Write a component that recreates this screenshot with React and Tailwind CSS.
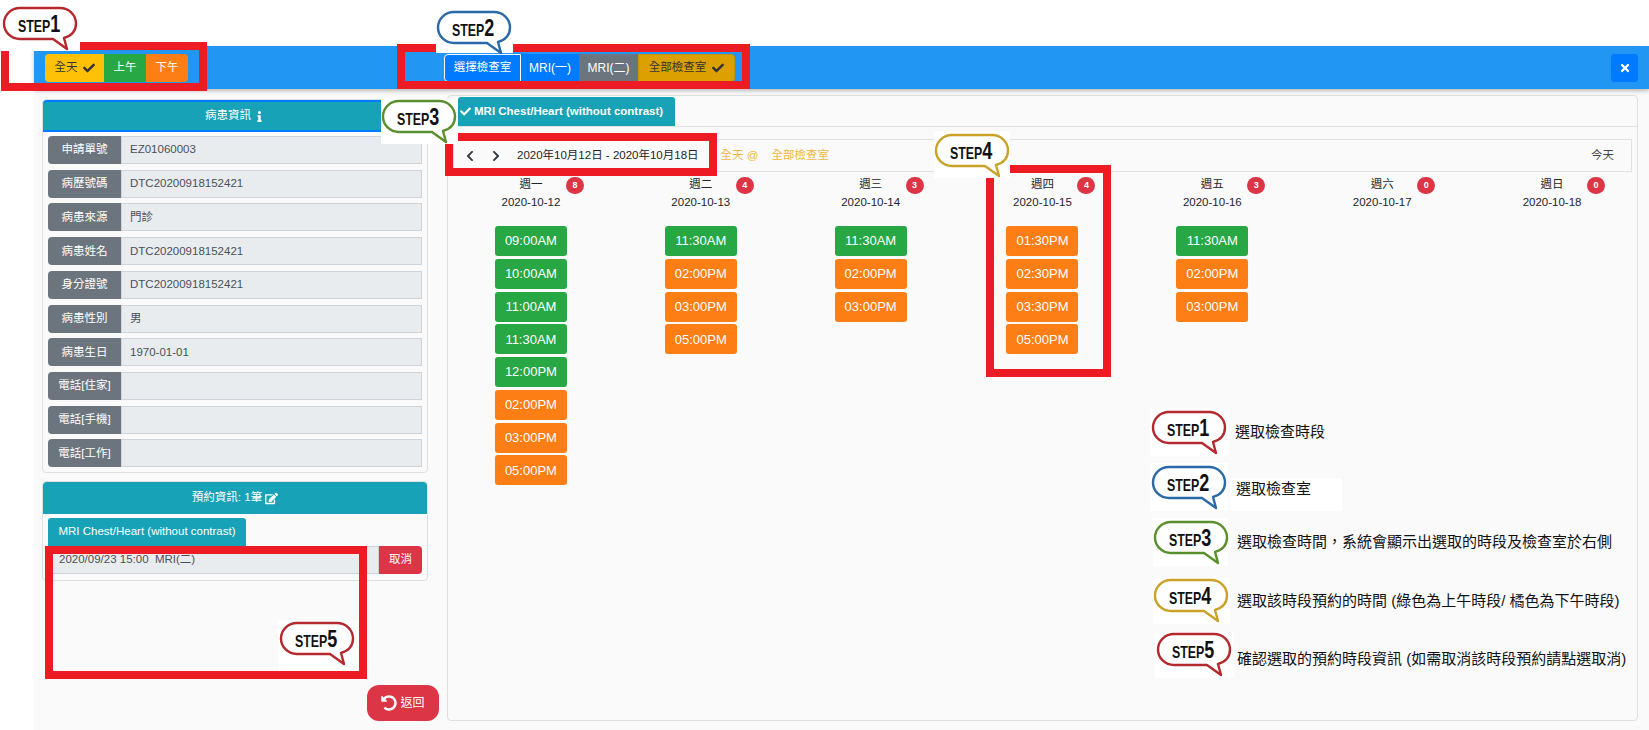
import React from 'react';
import { FaCheck, FaInfo, FaEdit, FaChevronLeft, FaChevronRight, FaUndoAlt, FaTimes } from 'react-icons/fa';

const patient = [
  ['申請單號', 'EZ01060003'],
  ['病歷號碼', 'DTC20200918152421'],
  ['病患來源', '門診'],
  ['病患姓名', 'DTC20200918152421'],
  ['身分證號', 'DTC20200918152421'],
  ['病患性別', '男'],
  ['病患生日', '1970-01-01'],
  ['電話[住家]', ''],
  ['電話[手機]', ''],
  ['電話[工作]', ''],
];

const days = [
  { name: '週一', date: '2020-10-12', count: 8, early: true, slots: ['09:00AM', '10:00AM', '11:00AM', '11:30AM', '12:00PM', '02:00PM', '03:00PM', '05:00PM'] },
  { name: '週二', date: '2020-10-13', count: 4, early: true, slots: ['11:30AM', '02:00PM', '03:00PM', '05:00PM'] },
  { name: '週三', date: '2020-10-14', count: 3, early: true, slots: ['11:30AM', '02:00PM', '03:00PM'] },
  { name: '週四', date: '2020-10-15', count: 4, slots: ['01:30PM', '02:30PM', '03:30PM', '05:00PM'] },
  { name: '週五', date: '2020-10-16', count: 3, slots: ['11:30AM', '02:00PM', '03:00PM'] },
  { name: '週六', date: '2020-10-17', count: 0, slots: [] },
  { name: '週日', date: '2020-10-18', count: 0, slots: [] },
];

function StepBubble({ n, color, className }) {
  return (
    <div className={`bg-white ${className}`}>
      <svg width="78" height="46" viewBox="1 1 78 46" className="block">
        <path
          d="M19 3H59C68 3 75 10 75 18.5C75 26 70 31 63 33L66 44L52 34H19C10 34 3 27 3 18.5C3 10 10 3 19 3Z"
          fill="#fff"
          stroke={color}
          strokeWidth="2.4"
          strokeLinejoin="round"
        />
        <text transform="translate(17 27) scale(0.75 1)" fontWeight="700" fill="#111" fontFamily="Liberation Sans, sans-serif">
          <tspan fontSize="16.5">STEP</tspan><tspan fontSize="24">{n}</tspan>
        </text>
      </svg>
    </div>
  );
}

function InfoRow({ label, value }) {
  return (
    <div className="flex h-[28px]">
      <div className="w-[73px] shrink-0 flex items-center justify-center rounded-l bg-[#6c757d] text-white">{label}</div>
      <div className="flex-1 flex items-center pl-[8px] bg-[#e9ecef] border border-[#ced4da] text-[#495057]">{value}</div>
    </div>
  );
}

function CardHeader({ children, className = '' }) {
  return (
    <div className={`h-[32px] flex items-center justify-center gap-[3px] bg-[#17a2b8] text-white ${className}`}>
      {children}
    </div>
  );
}

function DayColumn({ day }) {
  return (
    <div className={`flex flex-col items-center pt-[3px] ${day.early ? 'pr-[4px]' : ''}`}>
      <div className="relative w-full text-center text-[#212529]">
        <div className="h-[18px] leading-[18px]">{day.name}</div>
        <div className="h-[18px] leading-[18px]">{day.date}</div>
        <span className="absolute left-[calc(50%+35px)] top-[2px] w-[18px] h-[17px] rounded-full bg-[#dc3545] text-white text-[9px] font-bold flex items-center justify-center">
          {day.count}
        </span>
      </div>
      <div className="mt-[15px] flex flex-col gap-[2.75px]">
        {day.slots.map((slot) => (
          <div
            key={slot}
            className={`w-[72px] h-[30px] rounded-[3px] flex items-center justify-center text-white text-[13px] ${slot.includes('AM') || slot.startsWith('12') ? 'bg-[#28a745]' : 'bg-[#fd7e14]'}`}
          >
            {slot}
          </div>
        ))}
      </div>
    </div>
  );
}

export default function App() {
  return (
    <div className="relative w-[1649px] h-[730px] overflow-hidden bg-white text-[11.5px] [font-family:'Liberation_Sans','Noto_Sans_CJK_TC',sans-serif]">
      <div className="ml-[34px] pt-[46px] h-full flex flex-col">

        {/* Top bar */}
        <div className="relative z-10 h-[43px] shrink-0 flex items-center pl-[11px] pr-[11px] bg-[#2196f3] shadow-[0_2px_4px_rgba(0,0,0,0.25)]">
          <div className="flex h-[28px] text-white">
            <div className="w-[59px] flex items-center justify-center gap-[5px] rounded-l bg-[#ffc107] text-[#333]">全天 <FaCheck className="text-[12px]" /></div>
            <div className="w-[42px] flex items-center justify-center bg-[#28a745]">上午</div>
            <div className="w-[42px] flex items-center justify-center rounded-r bg-[#fd7e14]">下午</div>
          </div>
          <div className="flex h-[28px] ml-[256px] text-white">
            <div className="w-[77px] flex items-center justify-center rounded-l border border-white bg-[#007bff]">選擇檢查室</div>
            <div className="w-[58px] flex items-center justify-center bg-[#007bff] text-[12px]">MRI(一)</div>
            <div className="w-[59px] flex items-center justify-center bg-[#6c757d] text-[12px]">MRI(二)</div>
            <div className="w-[97px] flex items-center justify-center gap-[6px] rounded-r border border-[#c69500] bg-[#dca000] text-[#333]">全部檢查室 <FaCheck className="text-[12px]" /></div>
          </div>
          <div className="ml-auto w-[27px] h-[28px] rounded-[3px] bg-[#007bff] flex items-center justify-center text-white">
            <FaTimes className="text-[12px]" />
          </div>
        </div>

        <div className="flex-1 flex min-h-0 bg-[#fafafb]">

          {/* Left column */}
          <div className="w-[413px] shrink-0 flex flex-col pl-[8px] pt-[10px] pb-[9px] pr-[8px]">
            <div className="w-[386px] h-[374px] rounded border border-[#dfdfdf] bg-[#fafafb]">
              <CardHeader className="border-y-2 border-[#007bff] rounded-t">
                病患資訊 <FaInfo className="text-[11px]" />
              </CardHeader>
              <div className="flex flex-col gap-[5.72px] px-[5px] pt-[4px]">
                {patient.map(([label, value]) => (
                  <InfoRow key={label} label={label} value={value} />
                ))}
              </div>
            </div>

            <div className="w-[386px] h-[100px] mt-[8px] rounded border border-[#dfdfdf] bg-[#fafafb]">
              <CardHeader className="rounded-t">
                預約資訊: 1筆 <FaEdit className="text-[13px]" />
              </CardHeader>
              <div className="px-[5px] pt-[4px]">
                <div className="w-[198px] h-[28px] flex items-center justify-center rounded-t-[3px] bg-[#17a2b8] text-white">
                  MRI Chest/Heart (without contrast)
                </div>
                <div className="flex h-[28px]">
                  <div className="flex-1 flex items-center pl-[10px] bg-[#e9ecef] border border-[#ced4da] text-[#495057]">2020/09/23 15:00&nbsp; MRI(二)</div>
                  <div className="w-[43px] flex items-center justify-center rounded-r bg-[#dc3545] text-white">取消</div>
                </div>
              </div>
            </div>

            <div className="mt-auto self-end w-[72px] h-[36px] rounded-[12px] bg-[#dc3545] flex items-center justify-center gap-[3px] text-white text-[12px]">
              <FaUndoAlt className="text-[16px]" /> 返回
            </div>
          </div>

          {/* Calendar */}
          <div className="flex-1 min-w-0 pt-[6px] pr-[11px] pb-[9px]">
            <div className="relative h-full rounded border border-[#dfdfdf] bg-[#fafafb]">
              <div className="h-[31px] pl-[10px] pt-[1px] border-b border-[#e2e2e2]">
                <div className="w-[217px] h-[29px] flex items-center pl-[2px] gap-[3px] rounded-t-[3px] bg-[#17a2b8] text-white text-[11.5px] font-bold">
                  <FaCheck className="text-[11px]" /> MRI Chest/Heart (without contrast)
                </div>
              </div>

              <div className="mt-[12px] mx-[5px] h-[33px] flex items-center pl-[10px] pr-[17px] border border-[#e2e2e2] text-[#212529]">
                <FaChevronLeft className="text-[12px] text-[#343a40]" />
                <FaChevronRight className="ml-[14px] text-[12px] text-[#343a40]" />
                <span className="ml-[15px]">2020年10月12日 - 2020年10月18日</span>
                <span className="ml-[22px] text-[#f0b840]">全天 @</span>
                <span className="ml-[13px] text-[#f0b840]">全部檢查室</span>
                <span className="ml-auto text-[#444]">今天</span>
              </div>

              <div className="grid grid-cols-7">
                {days.map((day) => (
                  <DayColumn key={day.date} day={day} />
                ))}
              </div>

              {/* Legend */}
              <div className="absolute left-[702px] top-[312px] flex flex-col text-[15px] text-[#111]">
                <div className="flex items-center h-[48px]">
                  <StepBubble n="1" color="#b5282d" className="w-[79px] h-[48px] pl-[1px] pt-[2px]" />
                  <span className="ml-[6px]">選取檢查時段</span>
                </div>
                <div className="flex items-center h-[48px] mt-[7px]">
                  <StepBubble n="2" color="#2a6aa8" className="w-[78px] h-[48px] pl-[1px] pt-[2px]" />
                  <span className="ml-[2px] pl-[6px] w-[112px] h-[33px] mt-[15px] pb-[10px] bg-white flex items-center">選取檢查室</span>
                </div>
                <div className="flex items-center h-[48px] mt-[7px] ml-[3px]">
                  <StepBubble n="3" color="#5a8f2d" className="w-[75px] h-[48px] pt-[2px]" />
                  <span className="ml-[9px]">選取檢查時間，系統會顯示出選取的時段及檢查室於右側</span>
                </div>
                <div className="flex items-center h-[46px] mt-[12px] ml-[3px]">
                  <StepBubble n="4" color="#c9a227" className="w-[77px] h-[46px]" />
                  <span className="ml-[7px]">選取該時段預約的時間 (綠色為上午時段/ 橘色為下午時段)</span>
                </div>
                <div className="flex items-center h-[46px] mt-[8px] ml-[5px]">
                  <StepBubble n="5" color="#b5282d" className="w-[79px] h-[46px] pl-[1px]" />
                  <span className="ml-[3px] pt-[8px]">確認選取的預約時段資訊 (如需取消該時段預約請點選取消)</span>
                </div>
              </div>
            </div>
          </div>
        </div>
      </div>

      {/* Tutorial annotations over the page */}
      <div className="absolute z-20 left-[1px] top-[42px] w-[206px] h-[49px] border-8 border-[#ed1c24]" />
      <div className="absolute z-20 left-[397px] top-[44px] w-[353px] h-[45px] border-8 border-[#ed1c24]" />
      <div className="absolute z-20 left-[445px] top-[133px] w-[272px] h-[43px] border-8 border-[#ed1c24]" />
      <div className="absolute z-20 left-[986px] top-[165px] w-[125px] h-[212px] border-8 border-[#ed1c24]" />
      <div className="absolute z-20 left-[45px] top-[546px] w-[322px] h-[133px] border-8 border-[#ed1c24]" />

      <StepBubble n="1" color="#b5282d" className="absolute z-30 left-0 top-0 w-[80px] h-[51px] pl-[2px] pt-[6px]" />
      <StepBubble n="2" color="#2a6aa8" className="absolute z-30 left-[436px] top-0 w-[77px] h-[53px] pt-[10px]" />
      <StepBubble n="3" color="#5a8f2d" className="absolute z-30 left-[381px] top-[99px] w-[77px] h-[45px]" />
      <StepBubble n="4" color="#c9a227" className="absolute z-30 left-[934px] top-[131px] w-[76px] h-[47px] pt-[2px]" />
      <StepBubble n="5" color="#b5282d" className="absolute z-30 left-[278px] top-[620px] w-[81px] h-[51px] pl-[1px] pt-[1px]" />
    </div>
  );
}
